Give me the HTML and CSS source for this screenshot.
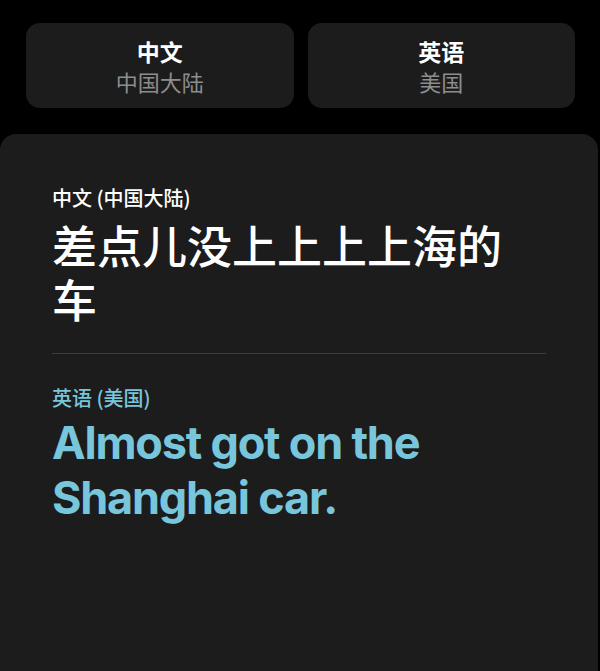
FILE: index.html
```html
<!DOCTYPE html>
<html lang="zh-CN">
<head>
  <meta charset="UTF-8" />
  <meta name="viewport" content="width=device-width, initial-scale=1.0"/>
  <title>翻译</title>
  <link rel="stylesheet" href="styles.css">
</head>
<body>
  <div class="lang-row">
    <button class="lang-btn">
      <span class="lang-name">中文</span>
      <span class="lang-region">中国大陆</span>
    </button>
    <button class="lang-btn">
      <span class="lang-name">英语</span>
      <span class="lang-region">美国</span>
    </button>
  </div>

  <div class="card">
    <div class="label">中文 (中国大陆)</div>
    <div class="source">差点儿没上上上上海的车</div>

    <div class="divider"></div>

    <div class="label label-accent">英语 (美国)</div>
    <div class="result">Almost got on the Shanghai car.</div>
  </div>
</body>
</html>
```

FILE: styles.css
```css
html,
body {
  height: 100%;
}

body {
  margin: 0;
  background-color: #000;
  color: #fff;
  font-family: "Noto Sans CJK SC", "Noto Sans", sans-serif;
  display: flex;
  flex-direction: column;
  overflow: hidden;
}

.lang-row {
  display: flex;
  gap: 14px;
  padding: 23px 25px 0 26px;
}

.lang-btn {
  flex: 1;
  height: 85px;
  border: none;
  border-radius: 14px;
  background-color: #1c1c1c;
  font-family: inherit;
  display: flex;
  flex-direction: column;
  align-items: center;
  justify-content: center;
  padding: 0;
}

.lang-name {
  color: #fff;
  font-size: 23px;
  font-weight: 700;
  line-height: 30px;
}

.lang-region {
  color: #8d8d8f;
  font-size: 22px;
  line-height: 30px;
}

.card {
  flex: 1;
  margin: 26px 2px 0 0;
  background-color: #1c1c1c;
  border-radius: 16px 16px 0 0;
  padding: 50px 52px 0 52px;
}

.label {
  font-size: 20px;
  font-weight: 500;
  line-height: 28px;
  color: #fff;
}

.label-accent {
  color: #78c6dc;
}

.source {
  margin-top: 6px;
  font-size: 45px;
  font-weight: 500;
  line-height: 54px;
  max-width: 470px;
}

.divider {
  height: 1px;
  background-color: #3d3d3f;
  margin: 27px 0 30px 0;
}

.result {
  margin-top: 3px;
  font-family: Inter, "Noto Sans", sans-serif;
  font-size: 45px;
  font-weight: 700;
  line-height: 55px;
  letter-spacing: -1.2px;
  color: #78c6dc;
  max-width: 440px;
}
```
